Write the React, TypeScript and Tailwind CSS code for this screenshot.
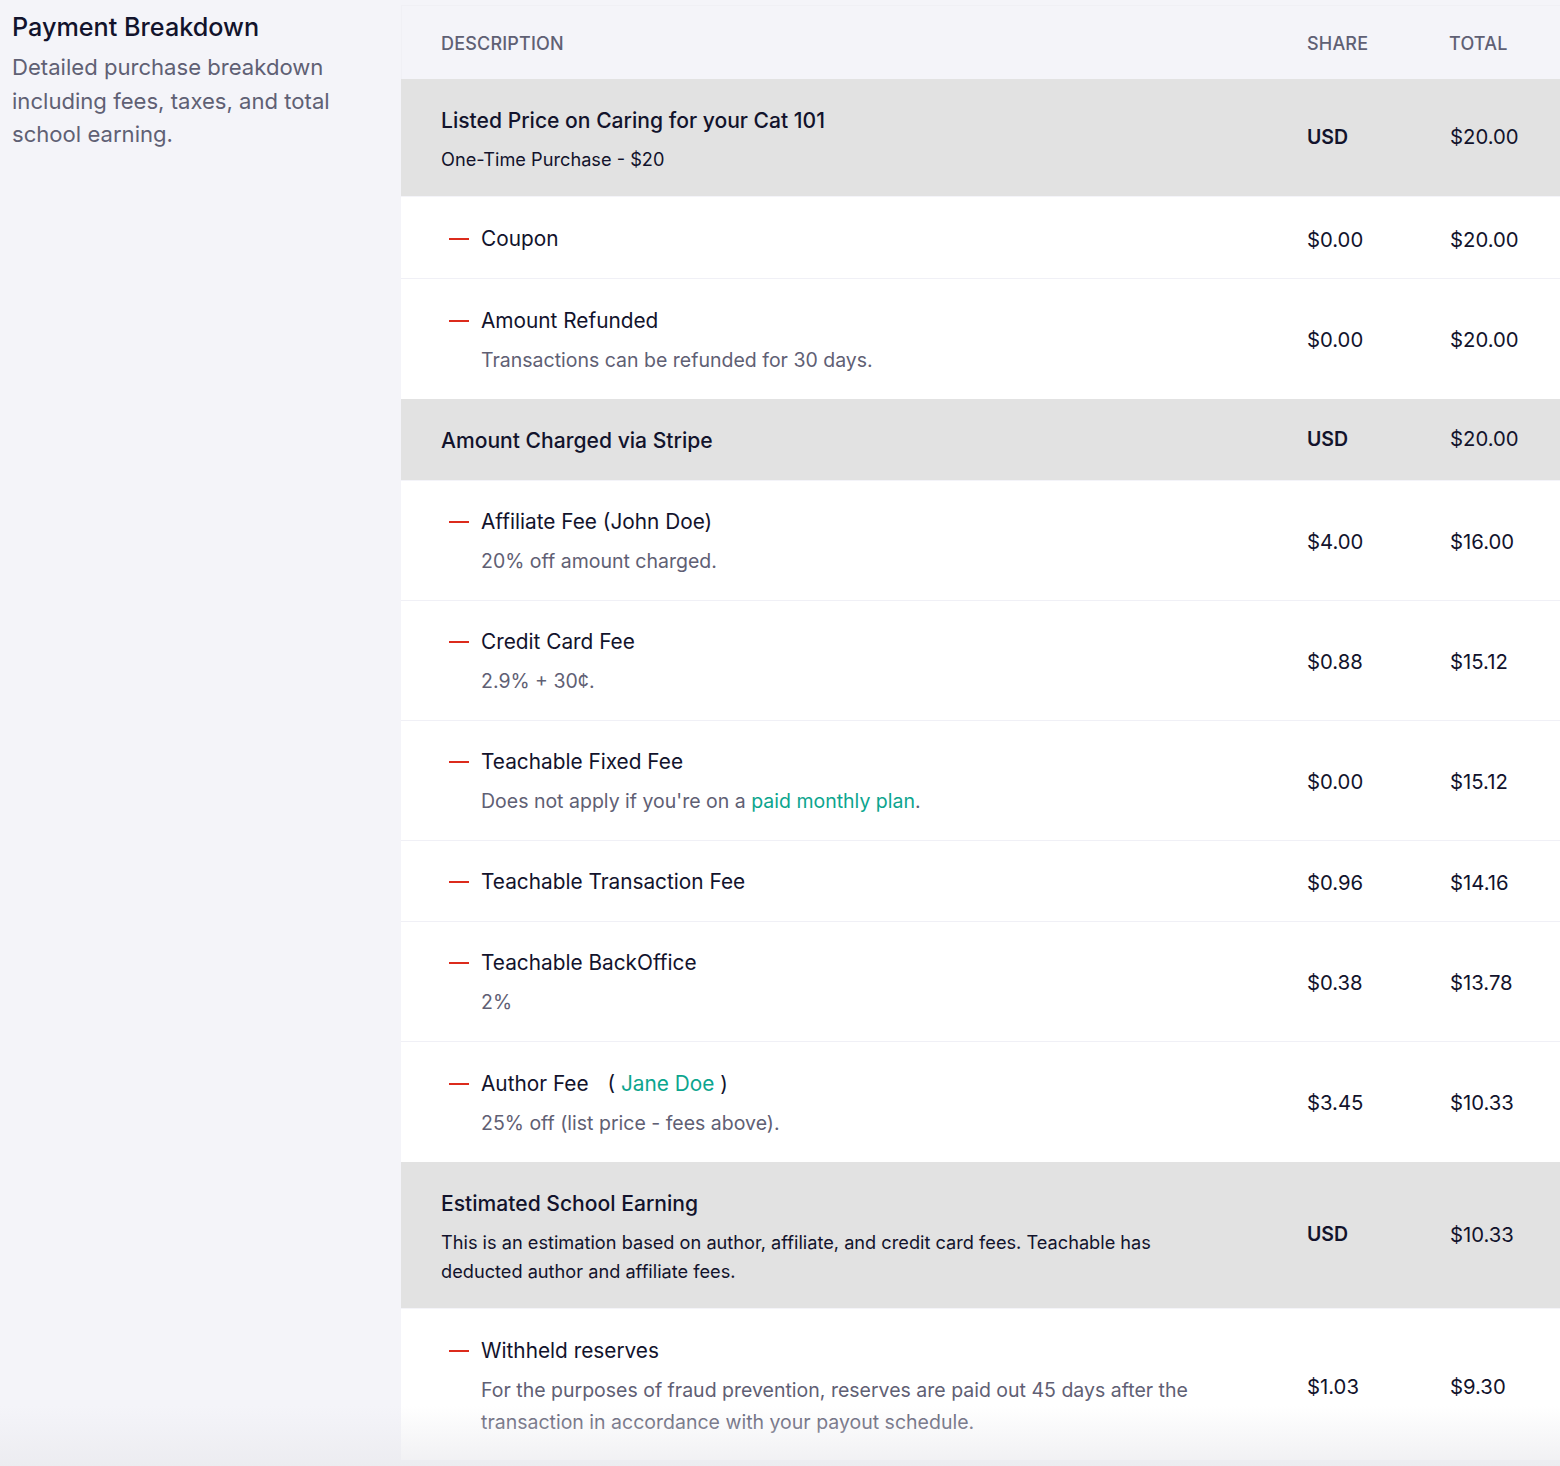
import React from "react";

const font = "font-['Inter',sans-serif]";

const Dash = () => <span className="mt-[19px] mr-[12px] ml-[8px] h-[2px] w-[20px] shrink-0 bg-[#dc2b1c]" />;

const Cells = ({ share, total, bold }: { share: string; total: string; bold?: boolean }) => (
  <>
    <div className={`w-[143px] shrink-0 ${bold ? "text-[19.5px] font-semibold" : "pt-[3px] text-[20.3px]"}`}>{share}</div>
    <div className={`w-[110px] shrink-0 text-[20.3px] ${bold ? "" : "pt-[3px]"}`}>{total}</div>
  </>
);

interface SectionProps {
  title: string;
  sub?: React.ReactNode;
  total: string;
  height: string;
}

const Section = ({ title, sub, total, height }: SectionProps) => (
  <div className={`flex items-center bg-[#e2e2e2] pl-[40px] text-[#12132c] ${height}`}>
    <div className={`min-w-0 flex-1 ${sub ? "pt-[4px]" : "pt-[2px]"}`}>
      <div className="text-[21.1px] leading-[32px] font-medium">{title}</div>
      {sub && <div className="mt-[8px] max-w-[740px] text-[18.2px] leading-[29px]">{sub}</div>}
    </div>
    <Cells share="USD" total={total} bold />
  </div>
);

interface RowProps {
  title: React.ReactNode;
  note?: React.ReactNode;
  share: string;
  total: string;
  height: string;
  last?: boolean;
}

const Row = ({ title, note, share, total, height, last }: RowProps) => (
  <div className={`flex items-center bg-white pl-[40px] text-[#12132c] ${height} ${last ? "" : "border-b border-[#f0f0f6]"} ${note ? "" : "pt-[2px]"}`}>
    <div className="flex min-w-0 flex-1 items-start">
      <Dash />
      <div className="min-w-0">
        <div className="text-[20.8px] leading-[40px]">{title}</div>
        {note && <div className="mt-[3px] mb-[2px] max-w-[730px] text-[19.5px] leading-[32px] text-[#5f6074]">{note}</div>}
      </div>
    </div>
    <Cells share={share} total={total} />
  </div>
);

const Link = ({ children }: { children: React.ReactNode }) => <span className="text-[#0ca58e]">{children}</span>;

export default function App() {
  return (
    <div className={`relative flex h-[1466px] w-[1560px] overflow-hidden bg-[#f4f4f9] ${font}`}>
      <div className="w-[401px] shrink-0 pt-[11px] pl-[12px]">
        <h2 className="text-[25.2px] leading-[32px] font-medium text-[#12132c]">Payment Breakdown</h2>
        <p className="mt-[8px] w-[340px] text-[22.1px] leading-[33.5px] text-[#5f6074]">
          Detailed purchase breakdown including fees, taxes, and total school earning.
        </p>
      </div>

      <div className="flex-1 pt-[5px]">
        <div className="flex h-[74px] items-center border-t border-l border-[#f0f0f5] pt-[1px] pl-[39px] text-[18px] font-medium tracking-[0.01em] text-[#5f6074]">
          <div className="flex-1">DESCRIPTION</div>
          <div className="w-[142px] shrink-0">SHARE</div>
          <div className="w-[111px] shrink-0">TOTAL</div>
        </div>

        <Section title="Listed Price on Caring for your Cat 101" sub="One-Time Purchase - $20" total="$20.00" height="h-[117px]" />
        <div className="h-px" />
        <Row title="Coupon" share="$0.00" total="$20.00" height="h-[82px]" />
        <Row title="Amount Refunded" note="Transactions can be refunded for 30 days." share="$0.00" total="$20.00" height="h-[120px]" last />
        <Section title="Amount Charged via Stripe" total="$20.00" height="h-[81px]" />
        <div className="h-px" />
        <Row title="Affiliate Fee (John Doe)" note="20% off amount charged." share="$4.00" total="$16.00" height="h-[120px]" />
        <Row title="Credit Card Fee" note="2.9% + 30¢." share="$0.88" total="$15.12" height="h-[120px]" />
        <Row
          title="Teachable Fixed Fee"
          note={
            <>
              Does not apply if you're on a <Link>paid monthly plan</Link>.
            </>
          }
          share="$0.00"
          total="$15.12"
          height="h-[120px]"
        />
        <Row title="Teachable Transaction Fee" share="$0.96" total="$14.16" height="h-[81px]" />
        <Row title="Teachable BackOffice" note="2%" share="$0.38" total="$13.78" height="h-[120px]" />
        <Row
          title={
            <>
              Author Fee <span className="ml-[13px]">(</span> <Link>Jane Doe</Link> )
            </>
          }
          note="25% off (list price - fees above)."
          share="$3.45"
          total="$10.33"
          height="h-[120px]"
          last
        />
        <Section
          title="Estimated School Earning"
          sub="This is an estimation based on author, affiliate, and credit card fees. Teachable has deducted author and affiliate fees."
          total="$10.33"
          height="h-[146px]"
        />
        <div className="h-px" />
        <Row
          title="Withheld reserves"
          note="For the purposes of fraud prevention, reserves are paid out 45 days after the transaction in accordance with your payout schedule."
          share="$1.03"
          total="$9.30"
          height="h-[151px] pt-[2px]"
          last
        />
      </div>

      <div className="pointer-events-none absolute right-0 bottom-0 left-0 h-[60px] bg-gradient-to-b from-transparent to-[#e9e9ed]/70" />
    </div>
  );
}
